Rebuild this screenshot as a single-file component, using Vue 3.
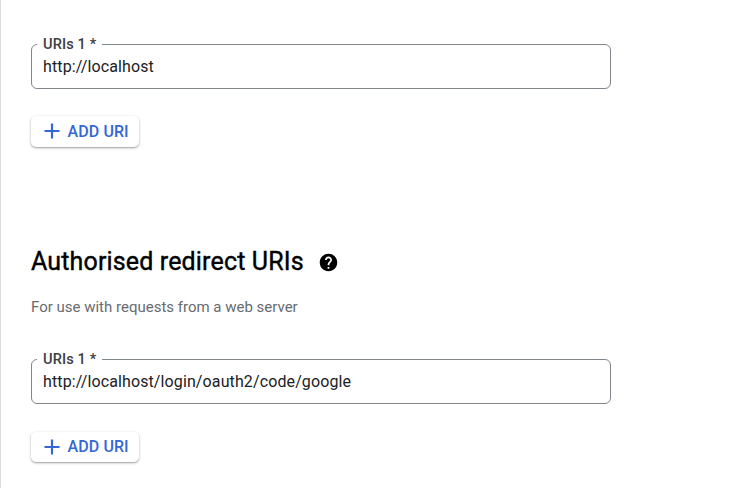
<script setup>
const origins = { value: 'http://localhost' }
const redirects = { value: 'http://localhost/login/oauth2/code/google' }
</script>

<template>
  <main class="page">
    <section class="group">
      <fieldset class="field">
        <legend>URIs 1 *</legend>
        <span class="value">{{ origins.value }}</span>
      </fieldset>
      <button class="add" type="button">
        <svg width="16" height="16" viewBox="0 0 16 16"><path d="M8 0.5V15.5M0.5 8H15.5" /></svg>
        <span>ADD URI</span>
      </button>
    </section>

    <section class="group second">
      <header class="heading">
        <h2>Authorised redirect URIs</h2>
        <svg class="help" width="21" height="21" viewBox="0 0 24 24">
          <path d="M12 2C6.48 2 2 6.48 2 12s4.48 10 10 10 10-4.48 10-10S17.52 2 12 2zm1 17h-2v-2h2v2zm2.07-7.75l-.9.92C13.45 12.9 13 13.5 13 15h-2v-.5c0-1.1.45-2.1 1.17-2.83l1.24-1.26c.37-.36.59-.86.59-1.41 0-1.1-.9-2-2-2s-2 .9-2 2H8c0-2.21 1.79-4 4-4s4 1.79 4 4c0 .88-.36 1.68-.93 2.25z" />
        </svg>
      </header>
      <p class="hint">For use with requests from a web server</p>
      <fieldset class="field">
        <legend>URIs 1 *</legend>
        <span class="value">{{ redirects.value }}</span>
      </fieldset>
      <button class="add low" type="button">
        <svg width="16" height="16" viewBox="0 0 16 16"><path d="M8 0.5V15.5M0.5 8H15.5" /></svg>
        <span>ADD URI</span>
      </button>
    </section>
  </main>
</template>

<style>
body {
  background: #fff;
}
</style>

<style scoped>
.page {
  box-sizing: border-box;
  height: 488px;
  padding: 36px 0 0 30px;
  border-left: 1px solid #dcdcdc;
  overflow: hidden;
  font-family: Roboto, sans-serif;
}
.group {
  display: flex;
  flex-direction: column;
  align-items: flex-start;
}
.field {
  box-sizing: border-box;
  width: 580px;
  height: 53px;
  margin: 0;
  padding: 0 5px;
  border: 1px solid #80868b;
  border-radius: 6px;
  color: #202124;
}
legend {
  box-sizing: border-box;
  width: 65px;
  height: 16px;
  padding: 0 0 0 6px;
  font-size: 14.6px;
  line-height: 16px;
  letter-spacing: 0.12px;
  font-weight: 500;
  color: #3c4043;
  white-space: nowrap;
}
.value {
  display: block;
  padding-left: 6px;
  font-size: 16px;
  line-height: 30px;
  letter-spacing: 0.115px;
}
.add {
  display: flex;
  align-items: flex-start;
  gap: 8px;
  box-sizing: border-box;
  width: 108px;
  height: 31px;
  margin: 27px 0 0;
  padding: 0 0 0 13px;
  border: 0;
  border-radius: 5px;
  background: #fff;
  box-shadow: 0 1px 3px rgba(0, 0, 0, 0.28), 0 1px 1px rgba(0, 0, 0, 0.14);
  color: #3367d6;
  font: 500 16px/31px Roboto, sans-serif;
  letter-spacing: 0.1px;
  white-space: nowrap;
}
.add svg {
  flex: none;
  margin-top: 7px;
  stroke: currentColor;
  stroke-width: 2.2;
  fill: none;
}
.add span {
  margin-left: -0.5px;
}
.low {
  height: 30px;
  margin-top: 28px;
  line-height: 29px;
}
.second {
  margin-top: 99px;
}
.heading {
  display: flex;
  align-items: center;
  height: 32px;
  gap: 14px;
}
h2 {
  width: 273px;
  margin: 0;
  font-size: 25px;
  line-height: 32px;
  font-weight: 400;
  letter-spacing: 0.15px;
  -webkit-text-stroke: 0.4px #000;
  white-space: nowrap;
  color: #000;
}
.help {
  margin-left: -0.5px;
}
.hint {
  margin: 19px 0 34px;
  font-size: 15px;
  line-height: 20px;
  color: #686b6f;
}
</style>
